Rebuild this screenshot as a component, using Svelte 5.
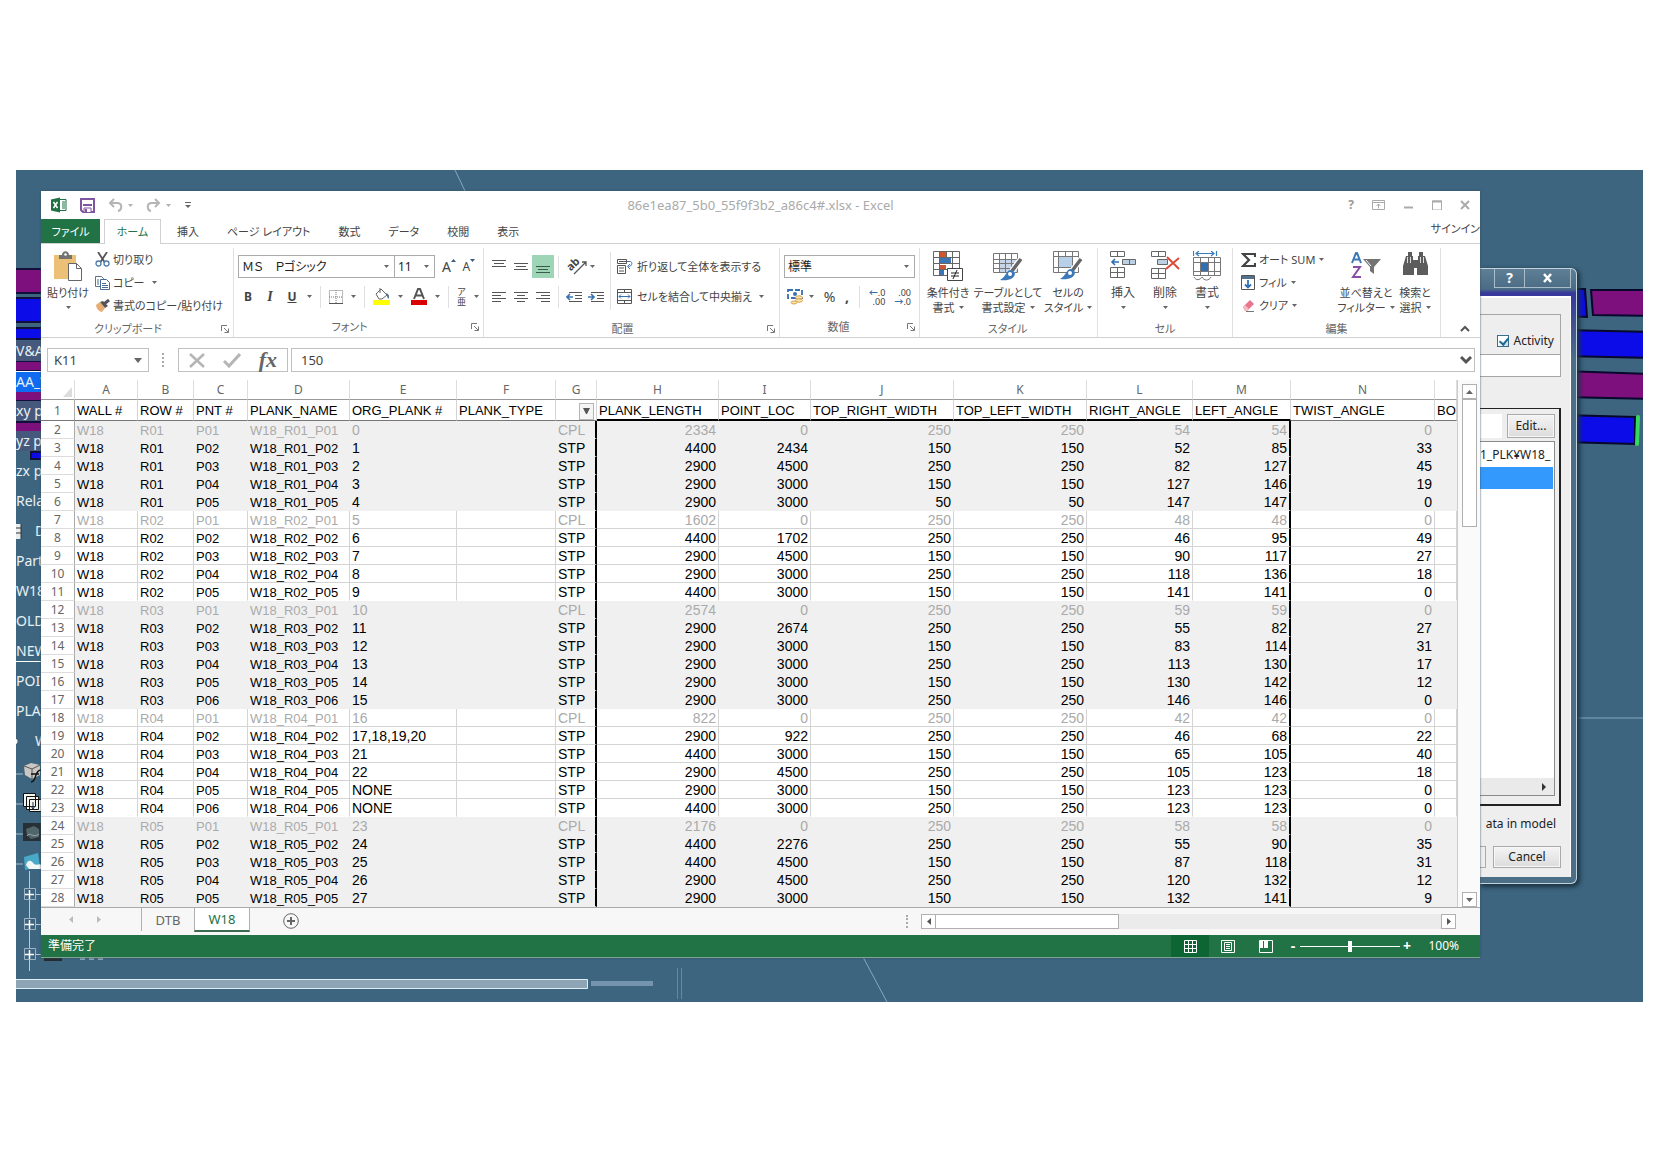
<script lang="ts">
  const tabs = ['挿入', 'ページ レイアウト', '数式', 'データ', '校閲', '表示'];

  const columns = [
    { id: 'A', label: 'WALL #', width: 63 },
    { id: 'B', label: 'ROW #', width: 56 },
    { id: 'C', label: 'PNT #', width: 54 },
    { id: 'D', label: 'PLANK_NAME', width: 102 },
    { id: 'E', label: 'ORG_PLANK #', width: 107 },
    { id: 'F', label: 'PLANK_TYPE', width: 99 },
    { id: 'G', label: '', width: 41 },
    { id: 'H', label: 'PLANK_LENGTH', width: 122 },
    { id: 'I', label: 'POINT_LOC', width: 92 },
    { id: 'J', label: 'TOP_RIGHT_WIDTH', width: 143 },
    { id: 'K', label: 'TOP_LEFT_WIDTH', width: 133 },
    { id: 'L', label: 'RIGHT_ANGLE', width: 106 },
    { id: 'M', label: 'LEFT_ANGLE', width: 98 },
    { id: 'N', label: 'TWIST_ANGLE', width: 144 },
  ];

  // row, point, org plank, length, point loc, right width, left width, right angle, left angle, twist
  const planks = [
    ['R01', 'P01', '0', 2334, 0, 250, 250, 54, 54, 0],
    ['R01', 'P02', '1', 4400, 2434, 150, 150, 52, 85, 33],
    ['R01', 'P03', '2', 2900, 4500, 250, 250, 82, 127, 45],
    ['R01', 'P04', '3', 2900, 3000, 150, 150, 127, 146, 19],
    ['R01', 'P05', '4', 2900, 3000, 50, 50, 147, 147, 0],
    ['R02', 'P01', '5', 1602, 0, 250, 250, 48, 48, 0],
    ['R02', 'P02', '6', 4400, 1702, 250, 250, 46, 95, 49],
    ['R02', 'P03', '7', 2900, 4500, 150, 150, 90, 117, 27],
    ['R02', 'P04', '8', 2900, 3000, 250, 250, 118, 136, 18],
    ['R02', 'P05', '9', 4400, 3000, 150, 150, 141, 141, 0],
    ['R03', 'P01', '10', 2574, 0, 250, 250, 59, 59, 0],
    ['R03', 'P02', '11', 2900, 2674, 250, 250, 55, 82, 27],
    ['R03', 'P03', '12', 2900, 3000, 150, 150, 83, 114, 31],
    ['R03', 'P04', '13', 2900, 3000, 250, 250, 113, 130, 17],
    ['R03', 'P05', '14', 2900, 3000, 150, 150, 130, 142, 12],
    ['R03', 'P06', '15', 2900, 3000, 250, 250, 146, 146, 0],
    ['R04', 'P01', '16', 822, 0, 250, 250, 42, 42, 0],
    ['R04', 'P02', '17,18,19,20', 2900, 922, 250, 250, 46, 68, 22],
    ['R04', 'P03', '21', 4400, 3000, 150, 150, 65, 105, 40],
    ['R04', 'P04', '22', 2900, 4500, 250, 250, 105, 123, 18],
    ['R04', 'P05', 'NONE', 2900, 3000, 150, 150, 123, 123, 0],
    ['R04', 'P06', 'NONE', 4400, 3000, 250, 250, 123, 123, 0],
    ['R05', 'P01', '23', 2176, 0, 250, 250, 58, 58, 0],
    ['R05', 'P02', '24', 4400, 2276, 250, 250, 55, 90, 35],
    ['R05', 'P03', '25', 4400, 4500, 150, 150, 87, 118, 31],
    ['R05', 'P04', '26', 2900, 4500, 250, 250, 120, 132, 12],
    ['R05', 'P05', '27', 2900, 3000, 150, 150, 132, 141, 9],
  ];

  const rows = planks.map((p, i) => {
    const first = p[1] === 'P01';
    return {
      n: i + 2,
      first,
      shaded: ['R01', 'R03', 'R05'].includes(String(p[0])),
      last: planks[i + 1]?.[0] !== p[0],
      cells: ['W18', p[0], p[1], `W18_${p[0]}_${p[1]}`, p[2], '', first ? 'CPL' : 'STP', ...p.slice(3)],
    };
  });

  const tree = [
    { text: 'V&A', kind: 'tint' },
    { text: 'AA_W', kind: 'picked' },
    { text: 'xy p', kind: 'tint' },
    { text: 'yz p', kind: 'tint' },
    { text: 'zx p' },
    { text: 'Rela' },
    { text: 'D', kind: 'deep', icon: 'list' },
    { text: 'Part' },
    { text: 'W18' },
    { text: 'OLD' },
    { text: 'NEW', kind: 'lined' },
    { text: 'POI' },
    { text: 'PLA' },
    { text: 'W', kind: 'deep', icon: 'dot' },
    { icon: 'gear', kind: 'after-text' },
    { icon: 'cards' },
    { icon: 'dark' },
    { icon: 'part' },
    { icon: 'node' },
    { icon: 'node' },
    { icon: 'node' },
  ];

  const icons: Record<string, string> = {
    excel: `<path d="M1 2.5 10 .5v15l-9-2z" fill="#1e7145"/><path d="M10 2.500h6v11h-6" fill="#fff" stroke="#1e7145"/><path d="M12 5h3M12 7h3M12 9h3M12 11h3" stroke="#1e7145"/><path d="m3.500 5 4 6M7.500 5l-4 6" stroke="#fff" stroke-width="1.500"/>`,
    save: `<path d="M1 1h13v13H3l-2-2z" fill="none" stroke="#80559f" stroke-width="2"/><path d="M3 7h9" stroke="#80559f" stroke-width="2"/><path d="M4 14v-4h7v4" fill="#fff" stroke="#80559f"/><path d="M5 11h2v3H5z" fill="#80559f"/>`,
    undo: `<path d="M6 1 2 5l4 4M2 5h7c6 0 5 7 1 8" fill="none" stroke="#b5b5b5" stroke-width="2"/>`,
    redo: `<path d="m9 1 4 4-4 4M13 5H6c-6 0-5 7-1 8" fill="none" stroke="#b5b5b5" stroke-width="2"/>`,
    custom: `<path d="M1 1.500h6" stroke="#666"/><path d="M1 4h6L4 7z" fill="#666"/>`,
    paste: `<path d="M1 4h22v24H1z" fill="#ecc077"/><path d="M6 4h3c0-5 7-5 7 0h3v4H6z" fill="#737373"/><circle cx="12.500" cy="3.500" r="1.300" fill="#fff"/><path d="M15.500 12.500h8l5 5v12h-13z" fill="#fff" stroke="#666"/><path d="M23.500 12.500v5h5" fill="none" stroke="#666"/>`,
    cut: `<path d="m3 0 6.500 10M12 0 5.500 10" stroke="#555" stroke-width="1.800"/><circle cx="3.500" cy="11.500" r="2.500" fill="none" stroke="#4f7ca8" stroke-width="1.300"/><circle cx="11.500" cy="11.500" r="2.500" fill="none" stroke="#4f7ca8" stroke-width="1.300"/>`,
    copy: `<path d="M.5.5h6l2 2v8h-8z" fill="#fff" stroke="#5f6f86"/><path d="M5.500 3.500h6l3 3v7h-9z" fill="#fff" stroke="#466b95"/><path d="M2 4h2M2 6h2M2 8h2M7 7.500h4M7 9.500h6M7 11.500h6" stroke="#466b95"/>`,
    brush: `<path d="m1 6 4-3 5 6-3 4c-3 0-6-4-6-7z" fill="#e9ad72"/><path d="m5 3 3-1 5 5-3 2z" fill="#555"/><path d="m9 5 5-4" stroke="#555" stroke-width="3"/>`,
    borders: `<path d="M.5.5h13v13H.5zM7 0v14M0 7h14" fill="none" stroke="#777" stroke-dasharray="1 1"/><path d="M0 13.500h14" stroke="#555"/>`,
    fill: `<path d="M0 12h17v5H0z" fill="#ffff00"/><path d="m3 6 5-5 6 6-5 4H6z" fill="#fff" stroke="#666"/><path d="M7 0v5" stroke="#666"/><path d="M13 5c3 1 4 4 2 6z" fill="#456f9d"/>`,
    color: `<path d="M0 12h16v5H0z" fill="#d80000"/><path d="m3 11 4-10h2l4 10M5 7.500h6" fill="none" stroke="#555" stroke-width="2"/>`,
    alignTop: `<path d="M0 1.500h14M2 4.500h10M0 7.500h14" stroke="#555"/>`,
    alignMid: `<path d="M0 4.500h14M2 7.500h10M0 10.500h14" stroke="#555"/>`,
    alignBottom: `<path d="M0 7.500h14M2 10.500h10M0 13.500h14" stroke="#3c5a4a"/>`,
    left: `<path d="M0 1.500h14M0 4.500h9M0 7.500h14M0 10.500h9" stroke="#555"/>`,
    center: `<path d="M0 1.500h14M3 4.500h8M0 7.500h14M3 10.500h8" stroke="#555"/>`,
    right: `<path d="M0 1.500h14M5 4.500h9M0 7.500h14M5 10.500h9" stroke="#555"/>`,
    slant: `<path d="M2 15 14 3M10 3h4v4" fill="none" stroke="#555" stroke-width="1.300"/>`,
    outdent: `<path d="M3 1.500h13M9 4.500h7M9 7.500h7M3 10.500h13" stroke="#555"/><path d="M7 6H1m3-3L1 6l3 3" fill="none" stroke="#3871b0" stroke-width="1.600"/>`,
    indent: `<path d="M3 1.500h13M9 4.500h7M9 7.500h7M3 10.500h13" stroke="#555"/><path d="M0 6h6M3 3l3 3-3 3" fill="none" stroke="#3871b0" stroke-width="1.600"/>`,
    wrap: `<path d="M.5.500h9v4h-9zM.5 6.500h8v8h-8zM2 9h5M2 12h5M2 2.500h9" fill="none" stroke="#555"/><path d="M10 2.500h3.500c2 0 2 5-2 5M13 5l-2.500 2.500L13 10" fill="none" stroke="#3871b0"/>`,
    merge: `<path d="M.5.500h14v14H.5zM0 3.500h15M0 11.500h15M7.500 0v3.500M7.500 11v4" fill="none" stroke="#555"/><path d="M2 7.500h11M4 5.500l-2 2 2 2M11 5.500l2 2-2 2" fill="none" stroke="#3871b0"/>`,
    money: `<path d="M1 1h14v8H1z" fill="#fff" stroke="#3871b0" stroke-width="1.800" stroke-dasharray="5 2"/><circle cx="8" cy="5" r="2" fill="#3871b0"/><ellipse cx="12" cy="8.500" rx="3.500" ry="1.700" fill="#fbe3b4" stroke="#d9a24b"/><ellipse cx="12" cy="11.500" rx="3.500" ry="1.700" fill="#fbe3b4" stroke="#d9a24b"/><ellipse cx="7" cy="13.500" rx="3" ry="1.500" fill="#fbe3b4" stroke="#d9a24b"/>`,
    cond: `<path d="M8 1h6v6H8zM8 14h6v5H8z" fill="#d0562f"/><path d="M8 7h11v6H8zM8 19h4v6H8z" fill="#3c74b4"/><path d="M1.500.500h26v24h-26zM1 6.500h26M1 12.500h26M1 18.500h26M7.500 0v25M14.500 0v6M20.500 0v25" fill="none" stroke="#666"/><path d="M15.500 17.500h15v12h-15z" fill="#fff" stroke="#444"/><path d="M19 22h8M19 25h8M25 19l-4 9" stroke="#222"/>`,
    tableStyle: `<path d="M7 9h18v12H7z" fill="#c8d5e8"/><path d="M1.500 2.500h24v19h-24zM1 8.500h24M1 12.500h24M1 17.500h24M7.500 2v20M13.500 2v20M19.500 2v20" fill="none" stroke="#777"/><path d="m29 8-9 12" stroke="#fff" stroke-width="6"/><path d="m29 8-9 12" stroke="#666" stroke-width="3.500"/><path d="M20 19c-6-1-5 6-12 10 8 1 15-1 15-7z" fill="#3d79b8"/><circle cx="18" cy="23" r="2" fill="#fff"/>`,
    cellStyle: `<path d="M6 6h14v10H6z" fill="#b8cfe8"/><path d="M1.500.500h25v21h-25zM1 5.500h25M1 16.500h25M6.500 0v22M20.500 0v22M13.500 0v5" fill="none" stroke="#777"/><path d="m29 8-9 12" stroke="#fff" stroke-width="6"/><path d="m29 8-9 12" stroke="#666" stroke-width="3.500"/><path d="M20 18c-6-1-5 6-12 10 8 1 15-1 15-7z" fill="#3d79b8"/><circle cx="18" cy="22" r="2" fill="#fff"/>`,
    insert: `<path d="M.5.500h14v5H.5zM7.500 0v6M.5 16.500h14v10H.5zM0 21.500h15M7.500 16v11" fill="none" stroke="#666"/><path d="M12.500 8.500h13v5h-13zM19.500 8v6" fill="#bccfe3" stroke="#666"/><path d="M9 11H2m3-3-3 3 3 3" fill="none" stroke="#2f6fb2" stroke-width="1.600"/>`,
    remove: `<path d="M.5.500h14v5H.5zM7.500 0v6M.5 17.500h14v10H.5zM0 22.500h15M7.500 17v11" fill="none" stroke="#666"/><path d="M6.500 8.500h10v5h-10z" fill="#bccfe3" stroke="#666"/><path d="m16 6 12 12M28 7 15 18" stroke="#dc4b38" stroke-width="2"/>`,
    format: `<path d="M8 11h7v10H8z" fill="#2f6fb2"/><path d="M.5 6.500h27v18H.5zM0 11.500h28M0 20.500h28M7.500 6v19M15.500 6v19M21.500 6v19M1 26c2 4 6 3 8 0 2 4 7 4 9 0" fill="none" stroke="#777"/><path d="M.5 0v5M23.500 0v5M3 2.500h18M6 0 3 2.500 6 5M18 0l3 2.500L18 5" fill="none" stroke="#3a7bbd" stroke-width="1.200"/>`,
    sum: `<path d="M14 4V1H2l6 6-6 6h12v-3" fill="none" stroke="#444" stroke-width="2.200"/>`,
    down: `<path d="M.5.500h13v14H.5z" fill="#fff" stroke="#555"/><path d="M1 1h12v3H1z" fill="#53718f"/><path d="M7 5v8M4 9.500 7 12.500l3-3" fill="none" stroke="#2f6fb2" stroke-width="1.800"/>`,
    eraser: `<path d="m2 8 7-7 4 4-7 7H4z" fill="#e9758b"/><path d="m2 8 2-2 4 4-2 2H4z" fill="#f6b9c4"/><path d="M5 12.500h8" stroke="#777"/>`,
    sort: `<path d="m1 12 4-10h1l4 10M2 8.500h7" fill="none" stroke="#3b78b8" stroke-width="2"/><path d="M2 16h7L2 26h8" fill="none" stroke="#8b4ca6" stroke-width="2"/><path d="M12 8h18l-7 8v7l-4-3v-4z" fill="#737373"/><path d="m15 9 5 6" stroke="#fff"/>`,
    find: `<path d="M6 1h4v4h1v4h5V5h1V1h4v4h2l3 10v9H15v-7h-3v7H1v-9L4 5h2z" fill="#5c5c5c"/><path d="M5.500 6v6M8.500 6v6M18.500 6v6M21.500 6v6" stroke="#ddd"/>`,
    launcher: `<path d="M.5 6V.500H6M3 3l4 4M7.500 3.500v4h-4" fill="none" stroke="#777"/>`,
    up: `<path d="m1 6 4-4 4 4" fill="none" stroke="#555" stroke-width="2"/>`,
    cross: `<path d="m1 1 14 13M15 1 1 14" stroke="#b5b5b5" stroke-width="2.500"/>`,
    check: `<path d="m1 8 5 5L17 1" fill="none" stroke="#b5b5b5" stroke-width="3"/>`,
    ribbonOpt: `<path d="M.5.500h12v9H.5zM0 2.500h13" fill="none" stroke="#aaa"/><path d="M6.500 8.500V4M4.500 6l2-2 2 2" fill="none" stroke="#aaa"/>`,
    min: `<path d="M1 7.500h9" stroke="#aaa" stroke-width="2"/>`,
    max: `<path d="M.5 1v9h9V1z" fill="none" stroke="#aaa"/><path d="M0 1.500h10" stroke="#aaa" stroke-width="2"/>`,
    close: `<path d="m1 1 8 8M9 1 1 9" stroke="#aaa" stroke-width="2"/>`,
    gridView: `<path d="M.5.500h12v12H.5zM0 4.500h13M0 8.500h13M4.500 0v13M8.500 0v13" fill="none" stroke="#fff"/>`,
    pageView: `<path d="M.5.500h13v12H.5zM3.500 2.500h7v8h-7zM5 4.500h4M5 6.500h4M5 8.500h4" fill="none" stroke="#fff"/>`,
    breakView: `<path d="M.5.500h13v12H.5z" fill="none" stroke="#fff"/><path d="M1 1h3v7H1zM5 1h4v7H5z" fill="#fff"/>`,
    plus: `<circle cx="8" cy="8" r="7.300" fill="none" stroke="#666"/><path d="M8 4v8M4 8h8" stroke="#666" stroke-width="2"/>`,
    list: `<path d="M0 2h5v15H0z" fill="#e8eef0"/><path d="M0 6h5M0 11h5M5 2v15" stroke="#333"/>`,
    dot: `<path d="M0 7c2 0 2 4 0 5z" fill="#fff"/>`,
    gear: `<path d="M0 13h7" stroke="#a8bccb"/><path d="M8 5l7-3 9 2v10l-8 4-7-4z" fill="#cbc8c4"/><path d="M8 5l8 3 8-4M16 8v10" stroke="#555" fill="none"/><path d="M25 9c-7 0-4 12-10 12M15 13h8" fill="none" stroke="#111" stroke-width="1.500"/>`,
    cards: `<path d="M0 13h7" stroke="#a8bccb"/><path d="M7.500 2.500h12v13h-12zM10.500 5.500h12v13h-12zM13.500 8.500h12v12h-12z" fill="#f5f5f0" stroke="#111"/><path d="M17 11v7M15 15l2 3 2-3" fill="none" stroke="#234"/>`,
    dark: `<path d="M0 13h7" stroke="#a8bccb"/><path d="M7 2h18v18H7z" fill="#283036"/><path d="M10 8l8-3 5 3v8l-8 2-4-4z" fill="#51666b"/><path d="M11 15c3-5 6 3 12-2" stroke="#9aa" fill="none"/>`,
    part: `<path d="M0 13h7" stroke="#a8bccb"/><path d="M8 6l14-4 2 14-15 3z" fill="#49a9c9"/><path d="M10 14c2-7 6-4 8-1 3 2 6-1 7 1v4H13z" fill="#f3f6f6"/><path d="M13.500 20v10" stroke="#bcd"/>`,
    node: `<path d="M13.500 0v30M19 13.500h6" stroke="#b9cad6"/><path d="M8.500 7.500h11v11h-11z" fill="#3e647f" stroke="#9fb4c4"/><path d="M13.500 9v9M9 13.500h9" stroke="#fff" stroke-width="1.500"/>`,
  };
</script>

{#snippet icon(name: string, w: number, h: number)}
  <svg width={w} height={h} viewBox="0 0 {w} {h}" aria-hidden="true">{@html icons[name]}</svg>
{/snippet}

{#snippet caret()}
  <svg class="caret" width="5" height="3" viewBox="0 0 5 3" aria-hidden="true"><path d="M0 0h5L2.500 3z" fill="#666" /></svg>
{/snippet}

{#snippet big(name: string, w: number, h: number, lines: string[], cls: string)}
  <button class="big {cls}">
    <span class="pic">{@render icon(name, w, h)}</span>
    <span>{lines[0]}</span>
    <span class="second">{lines[1]}{@render caret()}</span>
  </button>
{/snippet}

{#snippet groupLabel(text: string, launcher: boolean)}
  <div class="group-label" class:with-launcher={launcher}>
    <span>{text}</span>
    {#if launcher}<button class="launcher" aria-label="{text}の設定">{@render icon('launcher', 8, 8)}</button>{/if}
  </div>
{/snippet}

<main>
  <div class="desktop">
    <svg class="scene" width="700" height="832" aria-hidden="true">
      <path d="M439 0l10 21" stroke="#86a9c2" />
      <g stroke="#10103a" stroke-width="2">
        <path d="M-2 99h60v24H-2zM-2 191h60v10H-2zM-2 221h60v10H-2zM-2 252h60v10H-2z" fill="#7d107d" />
        <path d="M-2 128h60v24H-2zM-2 158h60v11H-2zM15 282h20v7H15z" fill="#0c0ce8" />
      </g>
      <path d="M661.500 798v31M665.500 798v31" stroke="#6f8698" />
      <path d="M0 809.500h571.500v9H0" fill="#8ca4b6" stroke="#e4edf2" />
      <path d="M575 811h62v5h-62z" fill="#7495ad" />
      <path d="M28 788h18v3H28z" fill="#252c30" />
      <path d="M64 789h27" stroke="#dfe8ee" stroke-dasharray="5 4" />
    </svg>
    <svg class="scene far" width="780" height="832" aria-hidden="true">
      <path d="M0 787l24 45M700 548h80" stroke="#86a9c2" />
      <g stroke="#08082c" stroke-width="2">
        <path d="M700 119h22l2 28-24-1z" fill="#0c0ce8" />
        <path d="M728 120h60v26l-58-1z" fill="#7d107d" />
        <path d="M700 160l88 2v26l-88-2z" fill="#0c0ce8" />
        <path d="M700 201l88 3v25l-88-2z" fill="#7d107d" />
        <path d="M700 245l72 2v27l-72-2z" fill="#0c0ce8" />
      </g>
      <path d="M775 247l-1 27" stroke="#35d860" stroke-width="4" stroke-linecap="round" />
    </svg>

    <ul class="tree">
      {#each tree as item}
        <li class={item.kind ?? ''}>
          {#if item.icon}{@render icon(item.icon, item.text ? 6 : 25, item.text ? 19 : 30)}{/if}
          {#if item.text}<span>{item.text}</span>{/if}
        </li>
      {/each}
    </ul>

    <section class="dialog">
      <div class="dialog-title">
        <button class="help">?</button>
        <button aria-label="閉じる">
          <svg width="11" height="10" viewBox="0 0 11 10"><path d="m2 1 7 8M9 1 2 9" stroke="#fff" stroke-width="2.500" /></svg>
        </button>
      </div>
      <div class="dialog-body">
        <div class="option-box">
          <label>
            <input type="checkbox" checked />
            <span>Activity</span>
          </label>
          <div class="blank"></div>
        </div>
        <div class="file-box">
          <div class="edit-row"><i></i><button class="push">Edit...</button></div>
          <div class="files">
            <div class="file">1_PLK¥W18_</div>
            <div class="file chosen"></div>
            <div class="files-scroll">
              <svg width="4" height="8" viewBox="0 0 4 8"><path d="M0 0v8l4-4z" fill="#333" /></svg>
            </div>
          </div>
        </div>
        <div class="hint">ata in model</div>
        <div class="dialog-actions"><i></i><button class="push">Cancel</button></div>
      </div>
    </section>

    <section class="excel">
      <header class="titlebar">
        <div class="quick">
          {@render icon('excel', 17, 16)}
          <button aria-label="上書き保存">{@render icon('save', 15, 15)}</button>
          <button aria-label="元に戻す">{@render icon('undo', 15, 15)}{@render caret()}</button>
          <button aria-label="やり直し">{@render icon('redo', 15, 15)}{@render caret()}</button>
          <button aria-label="クイック アクセス">{@render icon('custom', 8, 8)}</button>
        </div>
        <h1>86e1ea87_5b0_55f9f3b2_a86c4#.xlsx - Excel</h1>
        <div class="controls">
          <button class="q">?</button>
          <button aria-label="リボンの表示">{@render icon('ribbonOpt', 13, 10)}</button>
          <button aria-label="最小化">{@render icon('min', 11, 10)}</button>
          <button aria-label="最大化">{@render icon('max', 10, 10)}</button>
          <button aria-label="閉じる">{@render icon('close', 10, 10)}</button>
        </div>
      </header>

      <nav class="tabs">
        <button class="file-tab">ファイル</button>
        <button class="active">ホーム</button>
        {#each tabs as tab}
          <button>{tab}</button>
        {/each}
        <a href="#signin">サインイン</a>
      </nav>

      <div class="ribbon">
        <div class="group clipboard">
          <div class="group-body">
            <button class="big paste">
              <span class="pic">{@render icon('paste', 30, 30)}</span>
              <span>貼り付け</span>
              <span class="second">{@render caret()}</span>
            </button>
            <div class="stack">
              <button>{@render icon('cut', 15, 15)}切り取り</button>
              <button>{@render icon('copy', 15, 14)}コピー{@render caret()}</button>
              <button>{@render icon('brush', 15, 14)}書式のコピー/貼り付け</button>
            </div>
          </div>
          {@render groupLabel('クリップボード', true)}
        </div>

        <div class="group font">
          <div class="group-body lines">
            <div class="line">
              <div class="combo face"><input aria-label="フォント" value="ＭＳ　Ｐゴシック" />{@render caret()}</div>
              <div class="combo size"><input aria-label="サイズ" value="11" />{@render caret()}</div>
              <button class="grow">A<svg width="5" height="3" viewBox="0 0 5 3"><path d="M0 3h5L2.500 0z" fill="#3c5a7c" /></svg></button>
              <button class="shrink">A<svg width="5" height="3" viewBox="0 0 5 3"><path d="M0 0h5L2.500 3z" fill="#3c5a7c" /></svg></button>
            </div>
            <div class="line format-line">
              <button class="bold">B</button>
              <button class="italic">I</button>
              <button class="under">U</button>
              {@render caret()}
              <i class="sep"></i>
              <button aria-label="罫線">{@render icon('borders', 14, 14)}</button>
              {@render caret()}
              <i class="sep"></i>
              <button aria-label="塗りつぶし">{@render icon('fill', 17, 17)}</button>
              {@render caret()}
              <button aria-label="フォントの色">{@render icon('color', 16, 17)}</button>
              {@render caret()}
              <i class="sep"></i>
              <button class="ruby"><span>ア</span><span>亜</span></button>
              {@render caret()}
            </div>
          </div>
          {@render groupLabel('フォント', true)}
        </div>

        <div class="group align">
          <div class="group-body">
            <div class="lines">
              <div class="line icons">
                <button aria-label="上揃え">{@render icon('alignTop', 14, 15)}</button>
                <button aria-label="中央">{@render icon('alignMid', 14, 15)}</button>
                <button class="on" aria-label="下揃え">{@render icon('alignBottom', 14, 15)}</button>
                <i class="sep"></i>
                <button class="angle"><span>ab</span>{@render icon('slant', 16, 16)}{@render caret()}</button>
              </div>
              <div class="line icons">
                <button aria-label="左揃え">{@render icon('left', 14, 12)}</button>
                <button aria-label="中央揃え">{@render icon('center', 14, 12)}</button>
                <button aria-label="右揃え">{@render icon('right', 14, 12)}</button>
                <i class="sep"></i>
                <button aria-label="インデントを減らす">{@render icon('outdent', 16, 12)}</button>
                <button aria-label="インデントを増やす">{@render icon('indent', 16, 12)}</button>
              </div>
            </div>
            <i class="rule"></i>
            <div class="lines">
              <div class="line"><button class="text">{@render icon('wrap', 17, 15)}折り返して全体を表示する</button></div>
              <div class="line"><button class="text">{@render icon('merge', 17, 15)}セルを結合して中央揃え{@render caret()}</button></div>
            </div>
          </div>
          {@render groupLabel('配置', true)}
        </div>

        <div class="group number">
          <div class="group-body lines">
            <div class="line">
              <div class="combo kind">
                <select aria-label="表示形式"><option>標準</option></select>
                {@render caret()}
              </div>
            </div>
            <div class="line number-line">
              <button aria-label="通貨">{@render icon('money', 17, 16)}{@render caret()}</button>
              <button class="glyph">%</button>
              <button class="glyph comma">,</button>
              <i class="sep"></i>
              <button class="dec"><span><b>←</b>.0</span><span>.00</span></button>
              <button class="dec"><span>.00</span><span><b>→</b>.0</span></button>
            </div>
          </div>
          {@render groupLabel('数値', true)}
        </div>

        <div class="group styles">
          <div class="group-body">
            {@render big('cond', 32, 30, ['条件付き', '書式'], 'w48')}
            {@render big('tableStyle', 32, 30, ['テーブルとして', '書式設定'], 'w68')}
            {@render big('cellStyle', 32, 30, ['セルの', 'スタイル'], 'w48')}
          </div>
          {@render groupLabel('スタイル', false)}
        </div>

        <div class="group cells">
          <div class="group-body">
            {@render big('insert', 26, 30, ['挿入', ''], 'w42')}
            {@render big('remove', 29, 30, ['削除', ''], 'w42')}
            {@render big('format', 28, 30, ['書式', ''], 'w42')}
          </div>
          {@render groupLabel('セル', false)}
        </div>

        <div class="group editing">
          <div class="group-body">
            <div class="stack">
              <button>{@render icon('sum', 15, 14)}オート SUM {@render caret()}</button>
              <button>{@render icon('down', 15, 15)}フィル{@render caret()}</button>
              <button>{@render icon('eraser', 15, 14)}クリア{@render caret()}</button>
            </div>
            {@render big('sort', 31, 28, ['並べ替えと', 'フィルター'], 'w54')}
            {@render big('find', 27, 26, ['検索と', '選択'], 'w42')}
          </div>
          {@render groupLabel('編集', false)}
        </div>
        <button class="collapse" aria-label="リボンを折りたたむ">{@render icon('up', 10, 8)}</button>
      </div>

      <div class="formula-bar">
        <div class="name-box">
          <input aria-label="名前ボックス" value="K11" />
          <svg width="8" height="5" viewBox="0 0 8 5"><path d="M0 0h8L4 5z" fill="#666" /></svg>
        </div>
        <i class="dots"></i>
        <div class="fx-box">
          <button aria-label="キャンセル">{@render icon('cross', 16, 15)}</button>
          <button aria-label="入力">{@render icon('check', 18, 15)}</button>
          <button class="fx">fx</button>
        </div>
        <div class="formula">
          <input aria-label="数式" value="150" />
          <svg width="12" height="9" viewBox="0 0 12 9"><path d="m1 1 5 5 5-5" fill="none" stroke="#555" stroke-width="3" /></svg>
        </div>
      </div>

      <div class="sheet">
        <table>
          <colgroup>
            <col style="width: 34px" />
            {#each columns as column}
              <col style="width: {column.width}px" />
            {/each}
            <col />
          </colgroup>
          <thead>
            <tr>
              <th class="corner"><svg width="9" height="10" viewBox="0 0 9 10"><path d="M9 0v10H0z" fill="#dcdcdc" /></svg></th>
              {#each columns as column}
                <th>{column.id}</th>
              {/each}
              <th></th>
            </tr>
          </thead>
          <tbody>
            <tr class="names">
              <th>1</th>
              {#each columns as column, c}
                <td class:heavy={c >= 7 && c <= 12}>
                  {#if column.id === 'G'}
                    <button class="filter" aria-label="フィルター"><svg width="7" height="6" viewBox="0 0 7 6"><path d="M0 0h7L4 6H3z" fill="#555" /></svg></button>
                  {:else}
                    {column.label}
                  {/if}
                </td>
              {/each}
              <td>BO</td>
            </tr>
            {#each rows as row}
              <tr class:shaded={row.shaded} class:first={row.first} class:last={row.last}>
                <th>{row.n}</th>
                {#each row.cells as cell, c}
                  <td class:num={c > 6} class:big-text={c === 6 || c === 4} class:bar={c === 6 || c === 12}>{cell}</td>
                {/each}
                <td></td>
              </tr>
            {/each}
          </tbody>
        </table>
        <div class="vscroll">
          <button aria-label="上へ"><svg width="7" height="4" viewBox="0 0 7 4"><path d="M0 4h7L3.500 0z" fill="#666" /></svg></button>
          <i></i>
          <button aria-label="下へ"><svg width="7" height="4" viewBox="0 0 7 4"><path d="M0 0h7L3.500 4z" fill="#666" /></svg></button>
        </div>
      </div>

      <div class="sheet-tabs">
        <div class="arrows">
          <svg width="4" height="7" viewBox="0 0 4 7"><path d="M4 0v7L0 3.500z" fill="#bbb" /></svg>
          <svg width="4" height="7" viewBox="0 0 4 7"><path d="M0 0v7l4-3.500z" fill="#bbb" /></svg>
        </div>
        <button class="sheet-tab">DTB</button>
        <button class="sheet-tab current">W18</button>
        <button class="add" aria-label="新しいシート">{@render icon('plus', 16, 16)}</button>
        <i class="dots"></i>
        <div class="hscroll">
          <button aria-label="左へ"><svg width="4" height="7" viewBox="0 0 4 7"><path d="M4 0v7L0 3.500z" fill="#555" /></svg></button>
          <i></i>
          <button aria-label="右へ"><svg width="4" height="7" viewBox="0 0 4 7"><path d="M0 0v7l4-3.500z" fill="#555" /></svg></button>
        </div>
      </div>

      <footer class="status">
        <span>準備完了</span>
        <div class="views">
          <button class="on" aria-label="標準">{@render icon('gridView', 13, 13)}</button>
          <button aria-label="ページ レイアウト">{@render icon('pageView', 14, 13)}</button>
          <button aria-label="改ページ">{@render icon('breakView', 14, 13)}</button>
        </div>
        <button class="zoom-step">-</button>
        <input type="range" aria-label="ズーム" min="0" max="100" value="50" />
        <button class="zoom-step">+</button>
        <span class="percent">100%</span>
      </footer>
    </section>
  </div>
</main>

<style>
  :global(body) {
    background: #fff;
  }

  main {
    padding: 170px 18px 173px 16px;
    font: 12px/16px 'Noto Sans', 'Noto Sans CJK JP', sans-serif;
    font-feature-settings: 'palt';
    color: #444;
  }

  main * {
    box-sizing: border-box;
  }

  svg {
    display: block;
    flex: none;
  }

  button,
  input,
  select {
    font: inherit;
    font-feature-settings: inherit;
    color: inherit;
    background: none;
    border: 0;
    padding: 0;
    margin: 0;
    border-radius: 0;
    appearance: none;
    min-width: 0;
    white-space: nowrap;
  }

  .desktop {
    position: relative;
    overflow: hidden;
    background: #3d657f;
    padding: 21px 163px 44px 25px;
  }

  .scene {
    position: absolute;
    left: 0;
    top: 0;
  }

  .scene.far {
    left: auto;
    right: 0;
  }

  .tree {
    position: absolute;
    left: 0;
    top: 166px;
    width: 25px;
    margin: 0;
    padding: 0;
    overflow: hidden;
    list-style: none;
    color: #e9f1f5;
    font-size: 14px;
  }

  .tree li {
    display: flex;
    align-items: center;
    height: 30px;
    white-space: nowrap;
  }

  .tree span {
    line-height: 20px;
  }

  .tree .tint span {
    background: #46597c;
  }

  .tree .picked span {
    background: #0f6cf0;
    border-top: 1px solid #fff;
  }

  .tree .lined span {
    border-bottom: 1px solid #fff;
  }

  .tree .deep {
    gap: 13px;
  }

  .tree .after-text {
    margin-top: 5px;
  }

  /* dialog behind the main window */
  .dialog {
    position: absolute;
    top: 98px;
    right: 66px;
    width: 97px;
    height: 616px;
    padding: 0 5px 7px 0;
    background: linear-gradient(#5e7f96, #4a6c84 20px, #37379c 24px, #4c6f87 90px);
    border: 1px solid #c3d3de;
    border-left: 0;
    border-radius: 0 6px 6px 0;
    box-shadow: 2px 2px 4px 1px #1c3444;
    font-family: 'Noto Sans', sans-serif;
    color: #222;
  }

  .dialog-title {
    display: flex;
    justify-content: flex-end;
    height: 27px;
  }

  .dialog-title button {
    display: flex;
    align-items: center;
    justify-content: center;
    width: 47px;
    height: 19px;
    border: 1px solid #a9bcc9;
    border-top: 0;
    color: #fff;
    font-weight: bold;
    font-size: 14px;
  }

  .dialog-title .help {
    width: 30px;
    border-right: 0;
  }

  .dialog-body {
    height: 581px;
    padding: 16px 9px 0 0;
    background: #eee;
    border-top: 2px solid #fff;
    border-right: 1px solid #fff;
  }

  .option-box {
    height: 63px;
    border: 1px solid #a5a5a5;
    border-left: 0;
  }

  .option-box label {
    display: flex;
    align-items: center;
    justify-content: flex-end;
    gap: 4px;
    height: 39px;
    padding: 12px 6px 0 0;
  }

  .option-box input {
    width: 12px;
    height: 12px;
    border: 1px solid #3d6d8c;
    background: #fff linear-gradient(135deg, #fff 45%, #b9d7e8);
    position: relative;
  }

  .option-box input:checked::after {
    content: '';
    position: absolute;
    left: 3px;
    top: 0;
    width: 4px;
    height: 7px;
    border: solid #1f6a94;
    border-width: 0 2px 2px 0;
    transform: rotate(40deg);
  }

  .blank {
    height: 22px;
    background: #fff;
    border-top: 1px solid #a5a5a5;
  }

  .file-box {
    height: 398px;
    margin-top: 31px;
    padding: 5px 4px 6px 0;
    border: 2px solid #222;
    border-left: 0;
    border-top-width: 1px;
  }

  .edit-row,
  .dialog-actions {
    display: flex;
    justify-content: space-between;
    height: 24px;
  }

  .edit-row i {
    width: 22px;
    background: #fff;
  }

  .push {
    width: 48px;
    border: 1px solid #aaa;
    background: linear-gradient(#f4f4f4, #dcdcdc);
    box-shadow: inset 0 0 0 1px #f8f8f8;
  }

  .files {
    display: flex;
    flex-direction: column;
    height: 355px;
    margin-top: 3px;
    background: #fff;
    border: 1px solid #8a8a8a;
    border-left: 0;
  }

  .file {
    height: 25px;
    line-height: 25px;
  }

  .chosen {
    height: 22px;
    margin-right: 1px;
    background: #3399fc;
  }

  .files-scroll {
    display: flex;
    align-items: center;
    justify-content: flex-end;
    height: 17px;
    margin-top: auto;
    padding-right: 8px;
    background: #eaeaea;
  }

  .hint {
    margin: 8px 5px 12px 0;
    line-height: 20px;
    text-align: right;
  }

  .dialog-actions {
    height: 22px;
  }

  .dialog-actions i {
    width: 6px;
    border: 1px solid #aaa;
    border-left: 0;
  }

  .dialog-actions .push {
    width: 68px;
  }

  /* main window */
  .excel {
    position: relative;
    background: #fff;
    border-bottom: 1px solid #7fa48f;
    box-shadow: 0 0 2px #31505f;
  }

  .titlebar {
    display: flex;
    align-items: center;
    justify-content: space-between;
    height: 28px;
  }

  .quick {
    display: flex;
    align-items: center;
    gap: 13px;
    width: 324px;
    padding-left: 9px;
  }

  .quick button {
    display: flex;
    align-items: center;
    gap: 5px;
  }

  .quick .caret {
    opacity: 0.5;
  }

  h1 {
    margin: 0;
    color: #aaa;
    font-size: 13px;
    font-weight: normal;
  }

  .controls {
    display: flex;
    align-items: center;
    justify-content: flex-end;
    gap: 18px;
    width: 324px;
    padding-right: 10px;
  }

  .q {
    color: #999;
    font-weight: bold;
  }

  .tabs {
    display: flex;
    height: 25px;
    border-bottom: 1px solid #d0d0d0;
    font-size: 11px;
  }

  .tabs button {
    height: 24px;
    margin-right: 4px;
    padding: 2px 12px 0;
  }

  .tabs .file-tab {
    width: 59px;
    padding: 2px 0 0;
    background: #217346;
    color: #fff;
  }

  .tabs .active {
    width: 57px;
    height: 25px;
    padding: 0;
    background: #fff;
    border: 1px solid #d0d0d0;
    border-bottom: 0;
    color: #217346;
  }

  .tabs a {
    margin-left: auto;
    line-height: 20px;
    color: inherit;
    text-decoration: none;
  }

  .ribbon {
    display: flex;
    height: 94px;
    padding-top: 4px;
    border-bottom: 1px solid #d0d0d0;
  }

  .group {
    display: flex;
    flex-direction: column;
    border-right: 1px solid #e0e0e0;
  }

  .group-body {
    display: flex;
    height: 72px;
  }

  .clipboard { width: 193px; padding-left: 4px; }
  .font { width: 250px; padding-left: 4px; }
  .align { width: 296px; padding-left: 4px; }
  .number { width: 140px; padding: 0 4px; }
  .styles { width: 178px; padding-left: 2px; }
  .cells { width: 135px; padding-left: 4px; }
  .editing { width: 208px; padding-left: 4px; }

  .group-label {
    display: flex;
    justify-content: center;
    align-items: center;
    height: 17px;
    padding-right: 4px;
    color: #666;
    line-height: 17px;
    position: relative;
    font-size: 11px;
  }

  .with-launcher {
    padding-right: 22px;
  }

  .launcher {
    position: absolute;
    right: 4px;
    top: 5px;
  }

  .number .launcher {
    right: 0;
  }

  .big {
    display: flex;
    flex-direction: column;
    align-items: center;
    width: 46px;
    line-height: 15px;
  }

  .big .pic {
    display: flex;
    align-items: flex-start;
    height: 37px;
    padding-top: 3px;
  }

  .second {
    display: flex;
    align-items: center;
    gap: 4px;
    height: 14px;
  }

  .w48 { width: 52px; }
  .w68 { width: 68px; }
  .w42 { width: 42px; }
  .w54 { width: 56px; }

  .styles .big,
  .clipboard .big,
  .editing .big {
    font-size: 11px;
  }

  .stack {
    display: flex;
    flex-direction: column;
    padding-left: 4px;
  }

  .stack button {
    display: flex;
    align-items: center;
    gap: 3px;
    height: 23px;
    font-size: 11px;
  }

  .stack .caret,
  .text .caret {
    margin-left: 4px;
  }

  .editing .stack {
    width: 101px;
  }

  .editing .stack .caret {
    margin-left: 1px;
  }

  .lines {
    display: flex;
    flex-direction: column;
    gap: 7px;
    padding-top: 7px;
    height: 70px;
  }

  .line {
    display: flex;
    align-items: center;
    height: 23px;
  }

  .combo {
    display: flex;
    align-items: center;
    height: 23px;
    padding-right: 5px;
    border: 1px solid #aaa;
    color: #222;
  }

  .combo input,
  .combo select {
    flex: 1;
    padding-left: 3px;
  }

  .face { width: 157px; }
  .size { width: 40px; border-left: 0; }
  .kind { width: 100%; }

  .grow,
  .shrink {
    display: flex;
    align-items: flex-start;
    width: 22px;
    margin-left: 7px;
    font-size: 14px;
  }

  .shrink {
    margin-left: 0;
    font-size: 12px;
  }

  .format-line {
    gap: 8px;
    padding-left: 3px;
  }

  .sep {
    width: 1px;
    height: 22px;
    background: #e0e0e0;
  }

  .bold,
  .italic,
  .under {
    width: 14px;
    font-weight: bold;
  }

  .italic {
    font-family: 'Liberation Serif', serif;
    font-style: italic;
    font-size: 14px;
  }

  .under {
    text-decoration: underline;
  }

  .ruby {
    display: flex;
    flex-direction: column;
    font-size: 9px;
    line-height: 10px;
  }

  .icons button {
    display: flex;
    align-items: center;
    justify-content: center;
    width: 22px;
    height: 23px;
  }

  .icons .on {
    background: #9fd5b7;
  }

  .icons .sep {
    margin: 0 4px;
  }

  .icons .angle {
    width: 32px;
    position: relative;
    justify-content: flex-end;
    gap: 2px;
  }

  .angle span {
    position: absolute;
    left: 3px;
    top: 1px;
    transform: rotate(-45deg);
    font-weight: bold;
    font-size: 11px;
  }

  .rule {
    width: 1px;
    height: 58px;
    margin: 4px 6px 0 3px;
    background: #e0e0e0;
  }

  .text {
    display: flex;
    align-items: center;
    gap: 3px;
    font-size: 11px;
  }

  .number-line {
    justify-content: space-between;
    padding: 0 4px 0 3px;
  }

  .number-line button:first-child {
    display: flex;
    align-items: center;
    gap: 5px;
  }

  .glyph {
    font-size: 14px;
  }

  .comma {
    font-weight: bold;
    line-height: 8px;
  }

  .dec {
    display: flex;
    flex-direction: column;
    align-items: flex-end;
    font-size: 9px;
    line-height: 9px;
    width: 16px;
  }

  .dec b {
    color: #3871b0;
  }

  .collapse {
    margin: auto 10px 4px auto;
  }

  .formula-bar {
    display: flex;
    height: 42px;
    padding: 10px 5px 8px 6px;
    font-size: 13px;
  }

  .name-box,
  .fx-box,
  .formula {
    display: flex;
    align-items: center;
    height: 24px;
    border: 1px solid #c0c0c0;
  }

  .name-box {
    width: 102px;
    padding: 0 6px;
  }

  .name-box input,
  .formula input {
    flex: 1;
  }

  .dots {
    width: 3px;
    height: 14px;
    margin: 5px 13px;
    border-left: 2px dotted #aaa;
  }

  .fx-box {
    width: 110px;
    padding: 0 10px;
    justify-content: space-between;
  }

  .fx {
    font: italic bold 22px/20px 'Liberation Serif', serif;
    color: #666;
  }

  .formula {
    flex: 1;
    margin-left: 3px;
    padding: 0 2px 0 9px;
  }

  .sheet {
    display: flex;
    border-bottom: 1px solid #aaa;
  }

  table {
    flex: 1;
    width: 0;
    table-layout: fixed;
    border-spacing: 0;
    border-right: 1px solid #ccc;
    font-family: 'Liberation Sans', sans-serif;
    font-size: 13px;
    color: #000;
  }

  th {
    height: 18px;
    padding: 1px 0 0;
    border-right: 1px solid #aaa;
    border-bottom: 1px solid #dcdcdc;
    color: #666;
    font: 12px/16px 'Noto Sans', sans-serif;
  }

  thead th {
    height: 20px;
    border-right-color: #ddd;
    border-bottom-color: #999;
    line-height: 18px;
  }

  .corner svg {
    margin: 4px 2px 0 auto;
  }

  td {
    height: 18px;
    padding: 2px 2px 0;
    overflow: hidden;
    line-height: 15px;
    white-space: nowrap;
    border-right: 1px solid #d4d4d4;
    border-bottom: 1px solid #d4d4d4;
  }

  .names th,
  .names td {
    height: 21px;
    line-height: 18px;
    border-bottom-color: #777;
  }

  .names .heavy {
    border-bottom: 2px solid #000;
    line-height: 17px;
  }

  .filter {
    display: flex;
    align-items: center;
    justify-content: center;
    width: 15px;
    height: 17px;
    margin-left: auto;
    border: 1px solid #b5b5b5;
    background: #f5f5f5;
  }

  .shaded td {
    background: #f0f0f0;
    border-color: #f0f0f0;
  }

  .last td {
    border-bottom-color: transparent;
  }

  .first td {
    color: #aaa;
  }

  .num {
    text-align: right;
    font-size: 14px;
  }

  .big-text {
    font-size: 14px;
  }

  tr .bar {
    border-right: 2px solid #000;
  }

  .vscroll,
  .hscroll {
    display: flex;
  }

  .vscroll {
    flex-direction: column;
    width: 22px;
    padding: 4px 4px 0;
    background: #fafafa;
  }

  .vscroll button,
  .hscroll button {
    display: flex;
    align-items: center;
    justify-content: center;
    width: 15px;
    height: 15px;
    border: 1px solid #b0b0b0;
    background: #fff;
  }

  .vscroll i {
    width: 15px;
    height: 128px;
    background: #fff;
    border: 1px solid #b0b0b0;
  }

  .vscroll button:last-child {
    margin-top: auto;
  }

  .sheet-tabs {
    display: flex;
    height: 27px;
    background: #f7f7f7;
    font-size: 13px;
  }

  .arrows {
    display: flex;
    align-items: center;
    gap: 24px;
    width: 101px;
    padding-left: 28px;
    border-right: 1px solid #b0b0b0;
    height: 23px;
  }

  .sheet-tab {
    width: 52px;
    height: 24px;
    color: #666;
  }

  .current {
    width: 56px;
    background: #fff;
    border: 1px solid #b0b0b0;
    border-top: 0;
    border-bottom: 2px solid #3a6b50;
    color: #217346;
  }

  .add {
    height: 25px;
    margin: 0 auto 0 33px;
  }

  .hscroll {
    flex: 0 1 535px;
    margin: 6px 24px 0 0;
    height: 15px;
    background: #ebebeb;
  }

  .hscroll i {
    width: 183px;
    background: #fff;
    border: 1px solid #b0b0b0;
    border-left: 0;
  }

  .hscroll button:last-child {
    margin-left: auto;
  }

  .sheet-tabs .dots {
    margin: 7px 12px 0 0;
    height: 13px;
  }

  .status {
    display: flex;
    align-items: center;
    height: 22px;
    padding: 0 21px 0 7px;
    background: #217346;
    color: #fff;
  }

  .views {
    display: flex;
    height: 22px;
    margin-left: auto;
    margin-right: 1px;
  }

  .views button {
    display: flex;
    align-items: center;
    justify-content: center;
    width: 38px;
  }

  .views .on {
    background: #0e6534;
  }

  .zoom-step {
    width: 14px;
    font-size: 14px;
    font-weight: bold;
  }

  .status input {
    width: 100px;
    height: 12px;
    background: linear-gradient(#fff, #fff) center / 100% 1px no-repeat;
  }

  .status input::-webkit-slider-thumb {
    appearance: none;
    width: 4px;
    height: 11px;
    background: #fff;
  }

  .percent {
    width: 45px;
    text-align: right;
  }
</style>
